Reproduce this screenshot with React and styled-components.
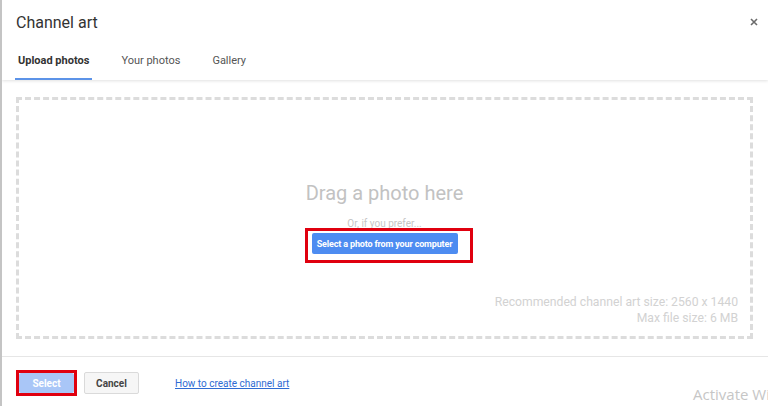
import styled, { createGlobalStyle } from 'styled-components';

const GlobalStyle = createGlobalStyle`
  html, body {
    margin: 0;
    padding: 0;
    background: #fff;
  }
  body {
    font-family: Roboto, "Liberation Sans", Arial, sans-serif;
  }
`;

const Dialog = styled.div`
  position: relative;
  width: 768px;
  height: 406px;
  box-sizing: border-box;
  border-left: 2px solid #c4c4c4;
  display: flex;
  flex-direction: column;
  overflow: hidden;
  background: #fff;
`;

const Header = styled.div`
  position: relative;
  z-index: 1;
  box-shadow: 0 1px 3px rgba(0, 0, 0, 0.12);
`;

const TitleRow = styled.div`
  height: 44px;
  display: flex;
  align-items: center;
  justify-content: space-between;
  padding: 0 9px 0 14px;
`;

const Title = styled.h1`
  margin: 0;
  font-size: 16px;
  font-weight: 400;
  color: #333;
`;

const CloseButton = styled.button`
  border: none;
  background: none;
  padding: 0;
  width: 10px;
  height: 10px;
  display: flex;
  align-items: center;
  justify-content: center;
  cursor: pointer;
`;

const Tabs = styled.div`
  display: flex;
  gap: 26px;
  padding-left: 13px;
  height: 36px;
`;

const Tab = styled.div`
  display: flex;
  align-items: center;
  padding: 0 3px 2px;
  font-size: 11px;
  font-weight: ${({ active }) => (active ? 700 : 400)};
  color: ${({ active }) => (active ? '#333' : '#555')};
  border-bottom: 2px solid ${({ active }) => (active ? '#5c93e8' : 'transparent')};
`;

const Body = styled.div`
  flex: 1;
  padding: 17px 15px 17px 14px;
  display: flex;
`;

const DropZone = styled.div`
  flex: 1;
  border: 3px dashed #dcdcdc;
  display: flex;
  flex-direction: column;
  align-items: center;
  padding-top: 81px;
  padding-bottom: 10px;
`;

const DragText = styled.div`
  font-size: 20px;
  color: #c2c2c2;
  line-height: 24px;
`;

const PreferText = styled.div`
  margin-top: 13px;
  font-size: 10px;
  color: #c6c6c6;
  line-height: 12px;
`;

const Highlight = styled.span`
  display: inline-flex;
  border: 3px solid #e0000f;
  padding: ${({ pad }) => pad};
  margin: ${({ offset }) => offset};
`;

const PrimaryButton = styled.button`
  border: none;
  border-radius: 2px;
  background: ${({ disabled }) => (disabled ? '#a9c6f7' : '#4d8cf1')};
  color: #fff;
  font-family: Roboto, "Liberation Sans", Arial, sans-serif;
  font-size: ${({ small }) => (small ? '10px' : '9px')};
  letter-spacing: ${({ small }) => (small ? '0' : '-0.15px')};
  font-weight: 700;
  white-space: nowrap;
  height: ${({ h }) => h}px;
  width: ${({ w }) => w}px;
  padding: 0;
  cursor: pointer;
`;

const Notes = styled.div`
  margin-top: auto;
  align-self: stretch;
  text-align: right;
  padding-right: 12px;
  font-size: 12.2px;
  line-height: 16px;
  color: #d2d2d2;
`;

const Footer = styled.div`
  height: 50px;
  border-top: 1px solid #e6e6e6;
  display: flex;
  align-items: center;
  padding-left: 14px;
  padding-top: 3px;
  box-sizing: border-box;
`;

const CancelButton = styled.button`
  margin-left: 7px;
  width: 55px;
  height: 22px;
  border: 1px solid #dadada;
  border-radius: 2px;
  background: #f6f6f6;
  color: #444;
  font-family: Roboto, "Liberation Sans", Arial, sans-serif;
  font-size: 10px;
  font-weight: 700;
  padding: 0;
`;

const HelpLink = styled.a`
  margin-left: 36px;
  font-size: 10px;
  color: #2f6bd3;
  text-decoration: underline;
`;

const Watermark = styled.div`
  position: absolute;
  left: 691px;
  bottom: 2px;
  font-family: "Open Sans", "Noto Sans", sans-serif;
  font-size: 15px;
  color: #c6c6c6;
  white-space: nowrap;
`;

export default function App() {
  return (
    <>
      <GlobalStyle />
      <Dialog>
        <Header>
          <TitleRow>
            <Title>Channel art</Title>
            <CloseButton aria-label="Close">
              <svg width="8" height="8" viewBox="0 0 8 8">
                <path d="M1 1L7 7M7 1L1 7" stroke="#6b6b6b" strokeWidth="1.6" />
              </svg>
            </CloseButton>
          </TitleRow>
          <Tabs>
            <Tab active>Upload photos</Tab>
            <Tab>Your photos</Tab>
            <Tab>Gallery</Tab>
          </Tabs>
        </Header>
        <Body>
          <DropZone>
            <DragText>Drag a photo here</DragText>
            <PreferText>Or, if you prefer...</PreferText>
            <Highlight pad="2px 12px 6px 4px" offset="-2px 0 0 8px">
              <PrimaryButton w={146} h={21}>Select a photo from your computer</PrimaryButton>
            </Highlight>
            <Notes>
              <div>Recommended channel art size: 2560 x 1440</div>
              <div>Max file size: 6 MB</div>
            </Notes>
          </DropZone>
        </Body>
        <Footer>
          <Highlight pad="0" offset="0">
            <PrimaryButton disabled small w={55} h={20}>Select</PrimaryButton>
          </Highlight>
          <CancelButton>Cancel</CancelButton>
          <HelpLink href="#">How to create channel art</HelpLink>
        </Footer>
        <Watermark>Activate Windows</Watermark>
      </Dialog>
    </>
  );
}
